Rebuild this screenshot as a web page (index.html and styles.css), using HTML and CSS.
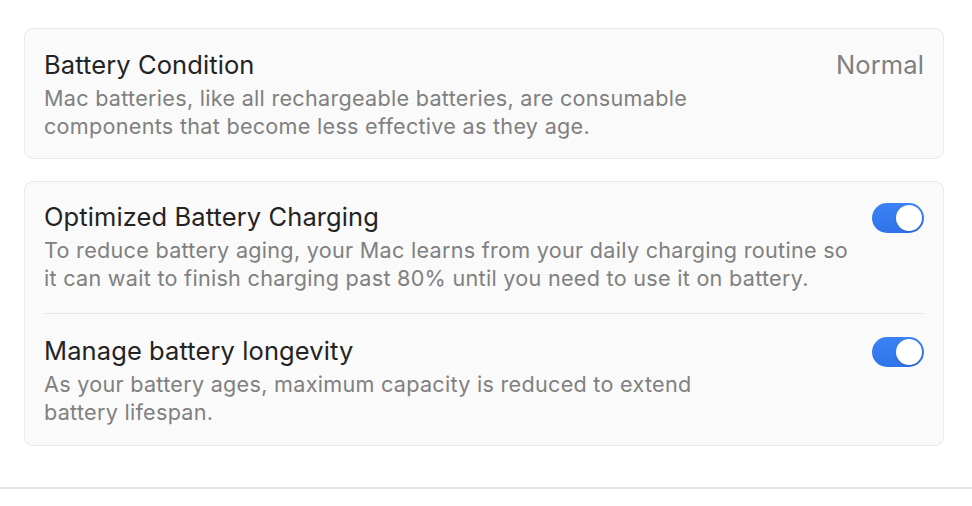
FILE: index.html
```html
<!DOCTYPE html>
<html>
<head>
<meta charset="utf-8">
<link rel="stylesheet" href="styles.css">
</head>
<body>
<div class="page">
  <section class="card card-single">
    <div class="row">
      <div class="text">
        <div class="title">Battery Condition</div>
        <div class="desc">Mac batteries, like all rechargeable batteries, are consumable<br>components that become less effective as they age.</div>
      </div>
      <div class="value">Normal</div>
    </div>
  </section>
  <section class="card card-list">
    <div class="row row-first">
      <div class="text">
        <div class="title">Optimized Battery Charging</div>
        <div class="desc">To reduce battery aging, your Mac learns from your daily charging routine so<br>it can wait to finish charging past 80% until you need to use it on battery.</div>
      </div>
      <div class="toggle"><span class="knob"></span></div>
    </div>
    <div class="divider"></div>
    <div class="row row-last">
      <div class="text">
        <div class="title">Manage battery longevity</div>
        <div class="desc">As your battery ages, maximum capacity is reduced to extend<br>battery lifespan.</div>
      </div>
      <div class="toggle"><span class="knob"></span></div>
    </div>
  </section>
</div>
<div class="footer-line"></div>
</body>
</html>
```
FILE: styles.css
```css
html, body {
  margin: 0;
  padding: 0;
  background: #ffffff;
  font-family: Inter, "Noto Sans", "Liberation Sans", sans-serif;
  -webkit-font-smoothing: antialiased;
}
.page {
  padding: 28px 28px 0 24px;
  display: flex;
  flex-direction: column;
  gap: 22px;
  width: 920px;
}
.card {
  background: #fafafa;
  border: 1px solid #e9e9e9;
  border-radius: 9px;
  padding: 0 19px;
}
.row {
  display: flex;
  justify-content: space-between;
  align-items: flex-start;
}
.card-single .row { padding: 21px 0 18px; }
.row-first { padding: 20px 0 21px; }
.row-last { padding: 22px 0 19px; }
.title {
  font-size: 25.5px;
  line-height: 30px;
  color: #232323;
  letter-spacing: 0.1px;
}
.desc {
  margin-top: 4px;
  font-size: 21.6px;
  line-height: 28px;
  color: #808080;
  letter-spacing: 0.28px;
}
.value {
  font-size: 25.5px;
  line-height: 30px;
  color: #808080;
  letter-spacing: 0.1px;
}
.divider {
  height: 1px;
  background: #e6e6e6;
}
.toggle {
  width: 52px;
  height: 30px;
  border-radius: 15px;
  background: linear-gradient(180deg, #3c82f6, #2f74ea);
  position: relative;
  margin-top: 1px;
  flex-shrink: 0;
}
.knob {
  position: absolute;
  right: 2px;
  top: 2px;
  width: 26px;
  height: 26px;
  border-radius: 50%;
  background: #ffffff;
  box-shadow: 0 1px 2px rgba(0,0,0,0.2);
}
.footer-line {
  margin-top: 41px;
  height: 2px;
  background: #e5e5e5;
}
```
